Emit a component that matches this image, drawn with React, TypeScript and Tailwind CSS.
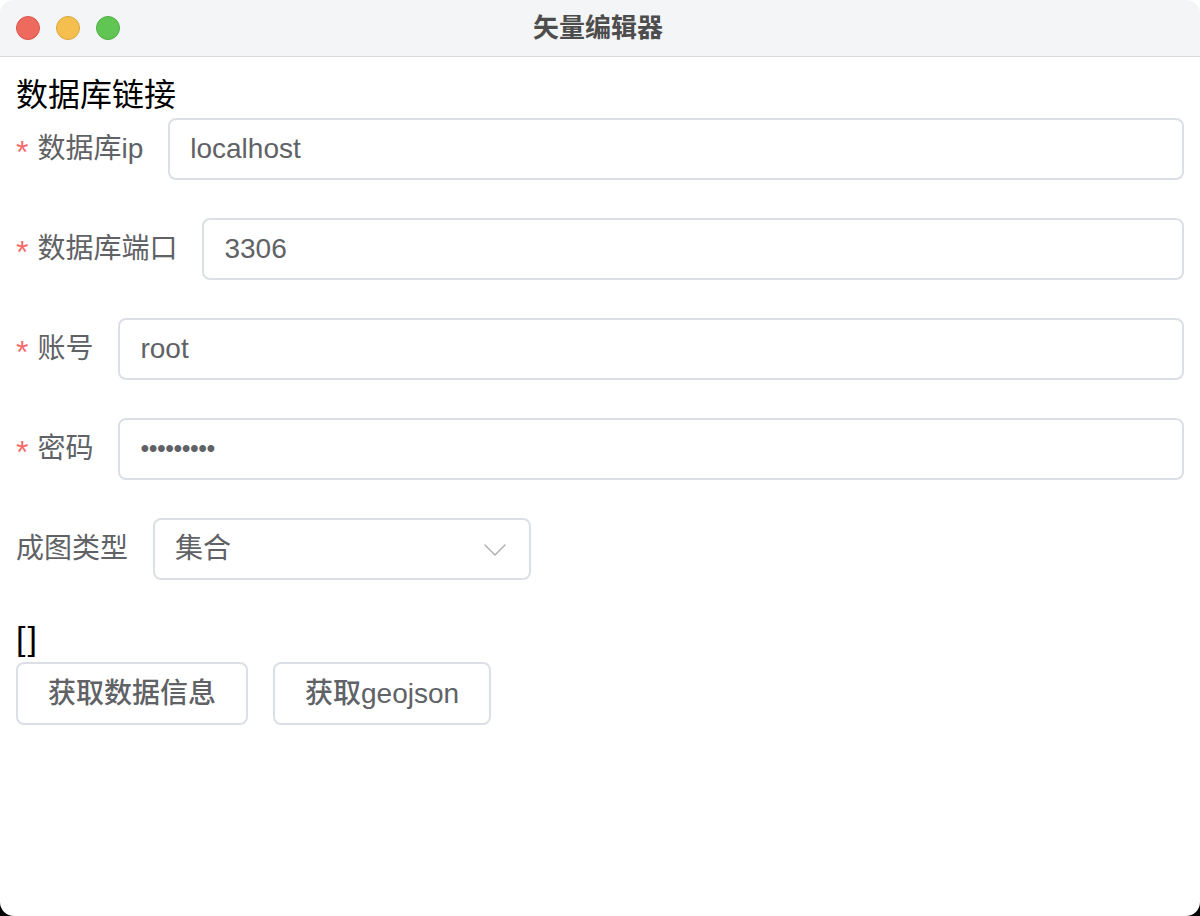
const font = { fontFamily: '"Liberation Sans", "Noto Sans CJK SC", sans-serif' }

type Field = { label: string; value: string; required?: boolean; secret?: boolean }

const fields: Field[] = [
  { label: '数据库ip', value: 'localhost', required: true },
  { label: '数据库端口', value: '3306', required: true },
  { label: '账号', value: 'root', required: true },
  { label: '密码', value: '•••••••••', required: true, secret: true },
]

function FormRow({ label, required, children }: { label: string; required?: boolean; children: React.ReactNode }) {
  return (
    <div className="flex items-center h-[62px] mb-[38px]">
      <label className="shrink-0 pr-[25px] text-[28px] leading-[62px] text-[#606266] flex items-center">
        {required && <span className="text-[#f56c6c] mr-[9px] text-[32px] leading-none mt-[6px]">*</span>}
        {label}
      </label>
      {children}
    </div>
  )
}

export default function App() {
  return (
    <div className="w-[1200px] h-[916px] bg-[linear-gradient(to_bottom,white_50%,black_50%)]" style={font}>
      <div className="w-full h-full bg-white rounded-[14px] overflow-hidden flex flex-col">
        {/* 标题栏 */}
        <header className="h-[57px] shrink-0 relative flex items-center bg-[#f3f5f6] border-b border-[#d9d9d9]">
          <div className="flex items-center gap-[16px] pl-[16px]">
            <span className="w-[24px] h-[24px] rounded-full bg-[#ee6a5f] border border-[#d9574c]" />
            <span className="w-[24px] h-[24px] rounded-full bg-[#f5bf4f] border border-[#dba63d]" />
            <span className="w-[24px] h-[24px] rounded-full bg-[#61c554] border border-[#4fae44]" />
          </div>
          <div className="absolute inset-0 flex items-center justify-center pr-[4px] text-[26px] font-bold text-[#4d4d4d] pointer-events-none">
            矢量编辑器
          </div>
        </header>

        {/* 内容 */}
        <main className="flex-1 px-[16px] pt-[17px]">
          <h2 className="text-[32px] leading-[42px] h-[42px] text-black mb-[2px]">数据库链接</h2>

          {fields.map((f) => (
            <FormRow key={f.label} label={f.label} required={f.required}>
              <div
                className={`flex-1 h-[62px] border-2 border-[#dcdfe6] rounded-[8px] flex items-center px-[20px] text-[#606266] ${
                  f.secret ? 'text-[25px] tracking-[-0.5px]' : 'text-[28px]'
                }`}
              >
                {f.value}
              </div>
            </FormRow>
          ))}

          <FormRow label="成图类型">
            <div className="w-[378px] h-[62px] border-2 border-[#dcdfe6] rounded-[8px] flex items-center justify-between pl-[20px] pr-[23px] text-[28px] text-[#606266]">
              <span>集合</span>
              <svg width="22" height="12" viewBox="0 0 22 12" fill="none" className="mt-[2px]">
                <polyline points="1,1 11,11 21,1" stroke="#a8abb2" strokeWidth="1.4" strokeLinecap="round" strokeLinejoin="round" />
              </svg>
            </div>
          </FormRow>

          <div className="text-[34px] leading-[44px] text-black -mt-[2px] tracking-[2px]">[]</div>

          <div className="flex gap-[25px] mt-[2px]">
            <button className="h-[63px] px-[30px] border-2 border-[#dcdfe6] rounded-[8px] text-[28px] font-medium text-[#606266] bg-white">
              获取数据信息
            </button>
            <button className="h-[63px] px-[30px] border-2 border-[#dcdfe6] rounded-[8px] text-[28px] font-medium text-[#606266] bg-white">
              获取geojson
            </button>
          </div>
        </main>
      </div>
    </div>
  )
}
